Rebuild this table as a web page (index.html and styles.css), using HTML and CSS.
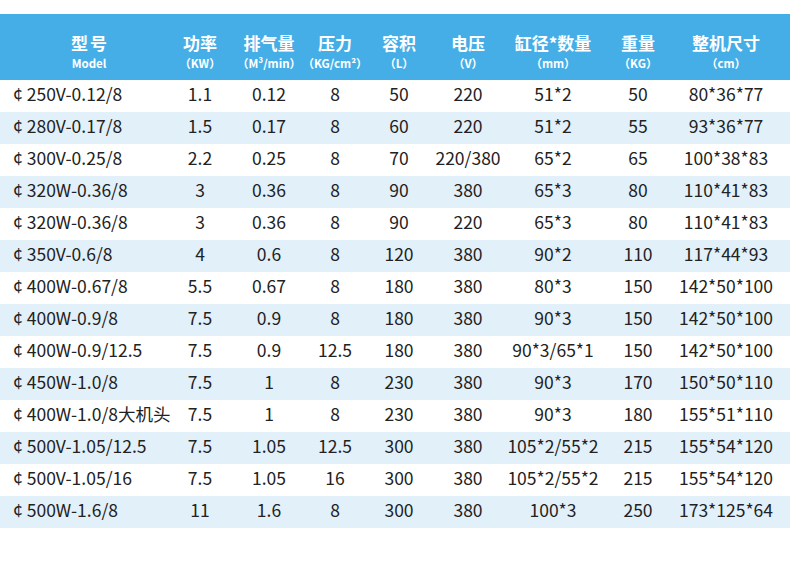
FILE: index.html
```html
<!DOCTYPE html>
<html lang="zh">
<head>
<meta charset="utf-8">
<link rel="stylesheet" href="styles.css">
</head>
<body>
<div class="page">
  <div class="table">
    <div class="row head">
      <div class="cell model"><span class="t wide">型号</span><span class="s">Model</span></div>
      <div class="cell"><span class="t">功率</span><span class="s">（KW）</span></div>
      <div class="cell"><span class="t">排气量</span><span class="s">（M³/min）</span></div>
      <div class="cell"><span class="t">压力</span><span class="s">（KG/cm²）</span></div>
      <div class="cell"><span class="t">容积</span><span class="s">（L）</span></div>
      <div class="cell"><span class="t">电压</span><span class="s">（V）</span></div>
      <div class="cell"><span class="t">缸径*数量</span><span class="s">（mm）</span></div>
      <div class="cell"><span class="t">重量</span><span class="s">（KG）</span></div>
      <div class="cell"><span class="t">整机尺寸</span><span class="s">（cm）</span></div>
    </div>
    <div class="row"><div class="cell model"><span class="c">¢</span>250V-0.12/8</div><div class="cell">1.1</div><div class="cell">0.12</div><div class="cell">8</div><div class="cell">50</div><div class="cell">220</div><div class="cell">51*2</div><div class="cell">50</div><div class="cell">80*36*77</div></div>
    <div class="row alt"><div class="cell model"><span class="c">¢</span>280V-0.17/8</div><div class="cell">1.5</div><div class="cell">0.17</div><div class="cell">8</div><div class="cell">60</div><div class="cell">220</div><div class="cell">51*2</div><div class="cell">55</div><div class="cell">93*36*77</div></div>
    <div class="row"><div class="cell model"><span class="c">¢</span>300V-0.25/8</div><div class="cell">2.2</div><div class="cell">0.25</div><div class="cell">8</div><div class="cell">70</div><div class="cell">220/380</div><div class="cell">65*2</div><div class="cell">65</div><div class="cell">100*38*83</div></div>
    <div class="row alt"><div class="cell model"><span class="c">¢</span>320W-0.36/8</div><div class="cell">3</div><div class="cell">0.36</div><div class="cell">8</div><div class="cell">90</div><div class="cell">380</div><div class="cell">65*3</div><div class="cell">80</div><div class="cell">110*41*83</div></div>
    <div class="row"><div class="cell model"><span class="c">¢</span>320W-0.36/8</div><div class="cell">3</div><div class="cell">0.36</div><div class="cell">8</div><div class="cell">90</div><div class="cell">220</div><div class="cell">65*3</div><div class="cell">80</div><div class="cell">110*41*83</div></div>
    <div class="row alt"><div class="cell model"><span class="c">¢</span>350V-0.6/8</div><div class="cell">4</div><div class="cell">0.6</div><div class="cell">8</div><div class="cell">120</div><div class="cell">380</div><div class="cell">90*2</div><div class="cell">110</div><div class="cell">117*44*93</div></div>
    <div class="row"><div class="cell model"><span class="c">¢</span>400W-0.67/8</div><div class="cell">5.5</div><div class="cell">0.67</div><div class="cell">8</div><div class="cell">180</div><div class="cell">380</div><div class="cell">80*3</div><div class="cell">150</div><div class="cell">142*50*100</div></div>
    <div class="row alt"><div class="cell model"><span class="c">¢</span>400W-0.9/8</div><div class="cell">7.5</div><div class="cell">0.9</div><div class="cell">8</div><div class="cell">180</div><div class="cell">380</div><div class="cell">90*3</div><div class="cell">150</div><div class="cell">142*50*100</div></div>
    <div class="row"><div class="cell model"><span class="c">¢</span>400W-0.9/12.5</div><div class="cell">7.5</div><div class="cell">0.9</div><div class="cell">12.5</div><div class="cell">180</div><div class="cell">380</div><div class="cell">90*3/65*1</div><div class="cell">150</div><div class="cell">142*50*100</div></div>
    <div class="row alt"><div class="cell model"><span class="c">¢</span>450W-1.0/8</div><div class="cell">7.5</div><div class="cell">1</div><div class="cell">8</div><div class="cell">230</div><div class="cell">380</div><div class="cell">90*3</div><div class="cell">170</div><div class="cell">150*50*110</div></div>
    <div class="row"><div class="cell model"><span class="c">¢</span>400W-1.0/8大机头</div><div class="cell">7.5</div><div class="cell">1</div><div class="cell">8</div><div class="cell">230</div><div class="cell">380</div><div class="cell">90*3</div><div class="cell">180</div><div class="cell">155*51*110</div></div>
    <div class="row alt"><div class="cell model"><span class="c">¢</span>500V-1.05/12.5</div><div class="cell">7.5</div><div class="cell">1.05</div><div class="cell">12.5</div><div class="cell">300</div><div class="cell">380</div><div class="cell">105*2/55*2</div><div class="cell">215</div><div class="cell">155*54*120</div></div>
    <div class="row"><div class="cell model"><span class="c">¢</span>500V-1.05/16</div><div class="cell">7.5</div><div class="cell">1.05</div><div class="cell">16</div><div class="cell">300</div><div class="cell">380</div><div class="cell">105*2/55*2</div><div class="cell">215</div><div class="cell">155*54*120</div></div>
    <div class="row alt"><div class="cell model"><span class="c">¢</span>500W-1.6/8</div><div class="cell">11</div><div class="cell">1.6</div><div class="cell">8</div><div class="cell">300</div><div class="cell">380</div><div class="cell">100*3</div><div class="cell">250</div><div class="cell">173*125*64</div></div>
  </div>
</div>
</body>
</html>
```
FILE: styles.css
```css
html, body {
  margin: 0;
  padding: 0;
  background: #ffffff;
}
.page {
  width: 790px;
  height: 570px;
  padding-top: 14px;
  box-sizing: border-box;
  font-family: "Noto Sans CJK SC", "Noto Sans", sans-serif;
  color: #222222;
}
.row {
  display: grid;
  grid-template-columns: 178px 44px 94px 38px 90px 48px 122px 48px 128px;
  height: 32px;
  align-items: center;
  justify-items: center;
  font-size: 17.5px;
  white-space: nowrap;
}
.row.alt {
  background: #e2f0fa;
}
.row.head {
  height: 66px;
  background: #46aee6;
  color: #ffffff;
}
.cell {
  justify-self: center;
  line-height: 1;
  padding-bottom: 4px;
}
.row .cell.model {
  justify-self: start;
  padding-left: 13px;
}
.c {
  margin-right: 4px;
}
.row.head .cell {
  display: flex;
  flex-direction: column;
  align-items: center;
  gap: 3px;
  padding-top: 9px;
  padding-bottom: 0;
}
.row.head .cell.model {
  justify-self: center;
  padding-left: 0;
}
.t {
  font-size: 17px;
  font-weight: 700;
  line-height: 20px;
}
.t.wide {
  letter-spacing: 2px;
  margin-right: -2px;
}
.s {
  font-size: 11.5px;
  font-weight: 700;
  line-height: 14px;
}
```
